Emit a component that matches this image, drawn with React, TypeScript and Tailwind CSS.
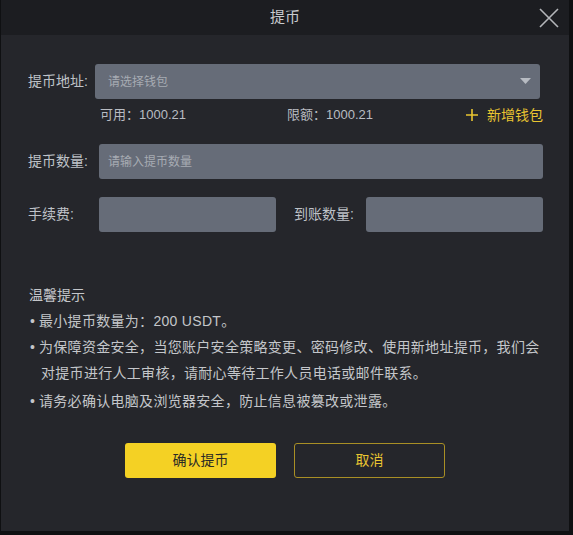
import React from 'react';

const font = { fontFamily: '"Liberation Sans", "Noto Sans CJK SC", sans-serif' };

const tips = [
  ['最小提币数量为：200 USDT。'],
  ['为保障资金安全，当您账户安全策略变更、密码修改、使用新地址提币，我们会', '对提币进行人工审核，请耐心等待工作人员电话或邮件联系。'],
  ['请务必确认电脑及浏览器安全，防止信息被篡改或泄露。'],
];

const App: React.FC = () => {
  return (
    <div className="w-[573px] h-[535px] bg-[#0f1012] flex" style={font}>
      <div className="w-[568px] h-[531px] ml-px bg-[#25262b] flex flex-col">
        {/* Header */}
        <div className="h-[35px] bg-[#1c1d21] relative flex items-center justify-center">
          <span className="text-[15px] text-[#c9cbcf]">提币</span>
          <button className="absolute right-[9px] top-[7px] w-[22px] h-[22px] flex items-center justify-center">
            <svg width="20" height="20" viewBox="0 0 20 20" fill="none" stroke="#b4b6ba" strokeWidth="1.6">
              <path d="M1 1 L19 19 M19 1 L1 19" />
            </svg>
          </button>
        </div>

        {/* Body */}
        <div className="flex flex-col pt-[29px] pl-[27px] pr-[26px]">
          <div className="flex items-center">
            <span className="w-[67px] text-[14px] text-[#bfc2c8]">提币地址:</span>
            <div className="w-[445px] h-[35px] rounded-[3px] bg-[#666c78] flex items-center justify-between pl-[13px] pr-[9px]">
              <span className="text-[12px] text-[#a7abb3]">请选择钱包</span>
              <svg width="11" height="7" viewBox="0 0 11 7"><path d="M0 0 H11 L5.5 6 Z" fill="#b7bbc2" /></svg>
            </div>
          </div>

          <div className="flex items-center h-[26px] mt-[3px] pl-[72px] text-[13px] text-[#b9bcc2]">
            <span className="w-[187px]">可用：1000.21</span>
            <span className="flex-1">限额：1000.21</span>
            <span className="flex items-center gap-[9px] text-[14px] text-[#e9c531]">
              <svg width="12" height="12" viewBox="0 0 12 12" stroke="#e9c531" strokeWidth="1.6"><path d="M6 0 V12 M0 6 H12" /></svg>
              新增钱包
            </span>
          </div>

          <div className="flex items-center mt-[16px]">
            <span className="w-[71px] text-[14px] text-[#bfc2c8]">提币数量:</span>
            <div className="flex-1 h-[35px] rounded-[3px] bg-[#666c78] flex items-center pl-[9px]">
              <span className="text-[12px] text-[#a7abb3]">请输入提币数量</span>
            </div>
          </div>

          <div className="flex items-center mt-[18px]">
            <span className="w-[71px] text-[14px] text-[#bfc2c8]">手续费:</span>
            <div className="w-[177px] h-[35px] rounded-[3px] bg-[#666c78]" />
            <span className="w-[72px] ml-[18px] text-[14px] text-[#bfc2c8]">到账数量:</span>
            <div className="flex-1 h-[35px] rounded-[3px] bg-[#666c78]" />
          </div>

          {/* Tips */}
          <div className="mt-[53px] flex flex-col text-[14px] text-[#c4c6ca]">
            <div className="h-[20px] leading-[20px] ml-px">温馨提示</div>
            <ul className="mt-[3px] flex flex-col tracking-[0.3px]">
              {tips.map((lines, i) => (
                <li key={i} className={`flex leading-[26px] ${i === 2 ? 'mt-[2px]' : ''}`}>
                  <span className="w-[11px] pl-[2px] shrink-0">•</span>
                  <span className="flex flex-col">
                    {lines.map((l, j) => (
                      <span key={j} className={j > 0 ? 'pl-[2px]' : ''}>{l}</span>
                    ))}
                  </span>
                </li>
              ))}
            </ul>
          </div>
        </div>

        {/* Buttons */}
        <div className="flex justify-center gap-[18px] mt-[29px]">
          <button className="w-[151px] h-[35px] rounded-[3px] bg-[#f4d124] text-[14px] text-[#2b2a26]">确认提币</button>
          <button className="w-[151px] h-[35px] rounded-[3px] border border-[#a98f25] text-[14px] text-[#e9c531]">取消</button>
        </div>
      </div>
    </div>
  );
};

export default App;
